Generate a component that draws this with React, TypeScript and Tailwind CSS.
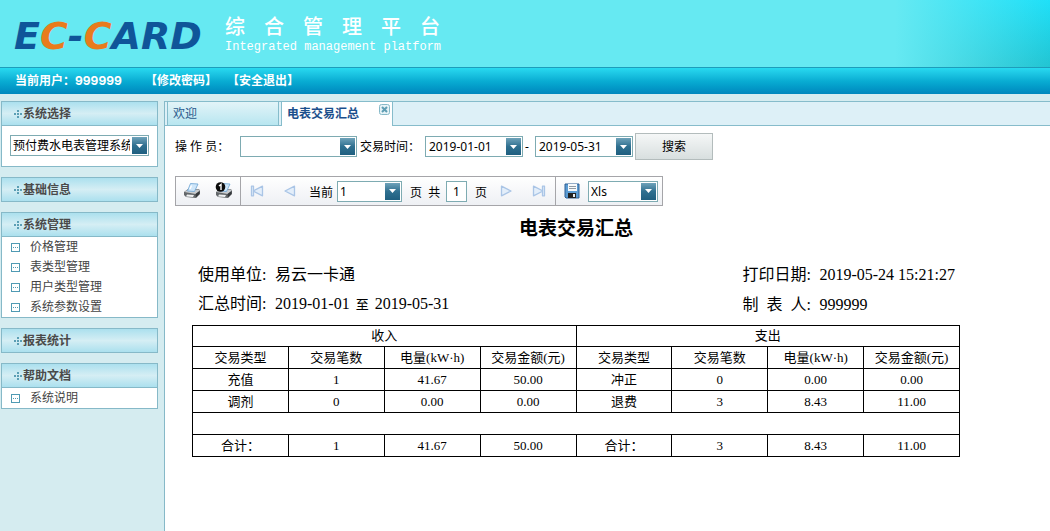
import type { ReactNode } from "react";

const priceLinks = ["价格管理", "表类型管理", "用户类型管理", "系统参数设置"];

const columns = ["交易类型", "交易笔数", "电量(kW·h)", "交易金额(元)"];

const rows = [
  ["充值", "1", "41.67", "50.00", "冲正", "0", "0.00", "0.00"],
  ["调剂", "0", "0.00", "0.00", "退费", "3", "8.43", "11.00"],
];

const totals = ["合计：", "1", "41.67", "50.00", "合计：", "3", "8.43", "11.00"];

function Arrow() {
  return (
    <span className="pointer-events-none absolute top-px right-px flex h-[17px] w-[15px] items-center justify-center bg-linear-to-b from-[#6fa3ba] via-[#2f7090] to-[#1f5f80]">
      <svg width="7" height="4" viewBox="0 0 7 4" fill="#fff">
        <path d="M0 0h7L3.500 4z" />
      </svg>
    </span>
  );
}

function Combo({ label, options, className }: { label: string; options: string[]; className: string }) {
  return (
    <span className={`relative block h-[21px] shrink-0 border border-[#7eabb2] bg-white ${className}`}>
      <select
        aria-label={label}
        className="block h-full w-full appearance-none overflow-hidden bg-transparent pr-[18px] pl-[2px] leading-[19px] whitespace-nowrap text-black outline-none"
      >
        {options.map((o) => (
          <option key={o}>{o}</option>
        ))}
      </select>
      <Arrow />
    </span>
  );
}

function DateBox({ label, value }: { label: string; value: string }) {
  return (
    <span className="relative block h-[21px] w-[98px] shrink-0 border border-[#7eabb2] bg-white">
      <input
        aria-label={label}
        defaultValue={value}
        className="block h-full w-full bg-transparent pr-4 pl-[3px] text-black outline-none"
      />
      <Arrow />
    </span>
  );
}

function Panel({ title, children }: { title: string; children?: ReactNode }) {
  return (
    <section>
      <h2 className="flex h-[25px] items-center border border-[#86b9c8] bg-linear-to-b from-[#abe0ee] via-[#d5eef4] to-[#abe0ee] pl-3 font-bold text-[#4a4a4a]">
        <svg width="9" height="8" viewBox="0 0 9 8" fill="#5b9fb5" shapeRendering="crispEdges">
          <path d="M3 0h2v2H3zM3 3h2v2H3zM3 6h2v2H3zM0 3h2v2H0zM6 3h2v2H6z" />
        </svg>
        {title}
      </h2>
      {children && <div className="border border-t-0 border-[#86b9c8] bg-white">{children}</div>}
    </section>
  );
}

function MenuLink({ text }: { text: string }) {
  return (
    <li>
      <a href="#" className="flex h-5 items-center gap-[10px] pl-[9px] text-[#444]">
        <svg width="9" height="9" viewBox="0 0 9 9" shapeRendering="crispEdges">
          <path d="M0 0h9v9H0z" fill="#4f9ab3" />
          <path d="M1 1h7v7H1z" fill="#fff" />
          <path d="M2 4h1v1H2zM4 4h1v1H4zM6 4h1v1H6z" fill="#4f9ab3" />
        </svg>
        {text}
      </a>
    </li>
  );
}

function PrinterIcon({ page }: { page?: boolean }) {
  return (
    <svg width="18" height="18" viewBox="0 0 18 18">
      <path d="M1 10l4-3h11l1 2v3l-4 4-10-1-2-2z" fill="#63676a" />
      <path d="M1.500 10l3.500-2.500h11l.500 1.500-4 3z" fill="#c9cccf" />
      <path d="M7.500 1.500L15 2l-3.500 7.500-7-.500z" fill="#cfe6f9" stroke="#6ba3d3" strokeWidth=".8" />
      <path d="M8.500 3.500L7 7" stroke="#fff" strokeWidth="1.500" />
      <path d="M12.500 12l4-3v3l-3.500 3.500z" fill="#36393c" />
      <path d="M4 12.500l7 .500-1 2-7-.500z" fill="#f0f2f3" />
      {page && (
        <>
          <circle cx="5.500" cy="5" r="4.800" fill="#0b0b0b" />
          <path d="M4 4l2-1.500V8" fill="none" stroke="#fff" strokeWidth="1.400" />
        </>
      )}
    </svg>
  );
}

function PageIcon({ back, end }: { back?: boolean; end?: boolean }) {
  return (
    <svg className={back ? "rotate-180" : ""} width="14" height="12" viewBox="0 0 14 12" fill="#e3eefa" stroke="#aac5e6" strokeWidth="1.300">
      <path d="M1.500 1.200L11 6l-9.500 4.800z" strokeLinejoin="round" />
      {end && <path d="M10.500 1.200h2v9.600h-2z" strokeLinejoin="round" />}
    </svg>
  );
}

function SaveIcon() {
  return (
    <svg width="16" height="16" viewBox="0 0 16 16">
      <path d="M1 1h14v14H2l-1-1z" fill="#5b9bd2" stroke="#2d5f94" />
      <path d="M4 1h9v7H4z" fill="#f7f9fb" />
      <path d="M5 3.500h7M5 5.500h7" stroke="#909aa4" />
      <path d="M4 10h8v5H4z" fill="#222" />
      <path d="M9 11h2v3H9z" fill="#e8edf2" />
    </svg>
  );
}

function IconButton({ label, children }: { label: string; children: ReactNode }) {
  return (
    <button type="button" aria-label={label} className="flex h-full w-8 shrink-0 items-center justify-center">
      {children}
    </button>
  );
}

export default function App() {
  return (
    <div className="flex min-h-screen flex-col bg-[#d5ecf0] font-['Noto_Sans','Noto_Sans_CJK_SC',sans-serif] text-xs">
      <header>
        <div className="flex h-[68px] items-start border-b border-[#1d9dbb] bg-[#66e9f2]">
          <h1 className="w-[225px] shrink-0 pt-4 pl-[14px] font-['DejaVu_Sans',sans-serif] text-[38px] leading-10 font-bold whitespace-nowrap text-[#0f5599] italic">
            E<span className="text-[#e87b1c]">C</span>-<span className="text-[#e87b1c]">C</span>ARD
          </h1>
          <div className="shrink-0 pt-[14px] text-white">
            <p className="flex font-['Noto_Sans_CJK_SC',sans-serif] gap-[19px] text-xl leading-6 font-medium">
              {"综合管理平台".split("").map((c) => (
                <span key={c}>{c}</span>
              ))}
            </p>
            <p className="mt-[2px] font-['Liberation_Mono',monospace] text-xs leading-[14px]">Integrated management platform</p>
          </div>
          <div className="ml-auto h-full w-[155px] shrink-0 bg-[linear-gradient(to_right,#66e9f2,transparent),linear-gradient(to_bottom,#1fe0f8,#22c4d2)]" />
        </div>
        <nav className="flex h-[26px] items-center bg-linear-to-b from-[#28d9f0] via-[#09add3] to-[#0087bd] pl-[15px] font-bold text-white">
          <span className="w-[130px]">
            当前用户：<span className="font-['Inter',sans-serif]">999999</span>
          </span>
          <a href="#" className="w-[82px]">【修改密码】</a>
          <a href="#">【安全退出】</a>
        </nav>
      </header>

      <div className="flex grow pt-[7px]">
        <aside className="flex w-[164px] shrink-0 flex-col gap-[10px] pr-[6px] pl-px">
          <Panel title="系统选择">
            <div className="px-2 pt-[9px] pb-[10px]">
              <Combo label="系统选择" options={["预付费水电表管理系统"]} className="w-full" />
            </div>
          </Panel>
          <Panel title="基础信息" />
          <Panel title="系统管理">
            <ul>
              {priceLinks.map((t) => (
                <MenuLink key={t} text={t} />
              ))}
            </ul>
          </Panel>
          <Panel title="报表统计" />
          <Panel title="帮助文档">
            <ul>
              <MenuLink text="系统说明" />
            </ul>
          </Panel>
        </aside>

        <main className="min-w-0 grow border-l border-[#86b9c8] bg-white">
          <div className="flex h-[25px] gap-[2px] border-y border-[#86bccb] bg-[#ddf0f7] pl-[2px] text-[#2b5a8c]">
            <button type="button" className="w-[112px] border-x border-[#86bccb] bg-linear-to-b from-[#e2f4f8] to-[#b8e6f0] pl-[5px] text-left">
              欢迎
            </button>
            <div className="-mb-px flex w-[112px] justify-between border-x border-[#86bccb] bg-white pr-[2px] pl-[5px]">
              <button type="button" className="font-bold text-[#1c4f8c]">电表交易汇总</button>
              <button type="button" aria-label="关闭" className="self-start pt-[2px]">
                <svg width="11" height="11" viewBox="0 0 11 11" fill="#e6f3f7" stroke="#86b9c8">
                  <rect x=".5" y=".5" width="10" height="10" rx="2" />
                  <path d="M3 3l5 5M8 3L3 8" stroke="#5f9db3" strokeWidth="2" />
                </svg>
              </button>
            </div>
          </div>

          <form className="flex h-[41px] items-center pl-[10px] text-black">
            <span className="w-[65px] shrink-0">操 作 员：</span>
            <Combo label="操作员" options={[""]} className="w-[117px]" />
            <span className="w-[68px] shrink-0 pl-[3px]">交易时间：</span>
            <DateBox label="开始日期" value="2019-01-01" />
            <span className="w-3 shrink-0 pl-[2px]">-</span>
            <DateBox label="结束日期" value="2019-05-31" />
            <button type="button" className="ml-[2px] h-[27px] w-[78px] shrink-0 border border-[#b3bcbc] bg-linear-to-b from-[#f5f7f7] to-[#d8dfdf]">
              搜索
            </button>
          </form>

          <div className="mt-[9px] ml-[10px] flex h-[30px] w-[488px] items-center border border-[#a5a5a9] bg-linear-to-b from-white to-[#eef0f4] text-black">
            <IconButton label="打印"><PrinterIcon /></IconButton>
            <IconButton label="打印当前页"><PrinterIcon page /></IconButton>
            <span className="h-full w-px bg-[#a5a5a9]" />
            <IconButton label="首页"><PageIcon back end /></IconButton>
            <IconButton label="上一页"><PageIcon back /></IconButton>
            <span className="w-8 shrink-0 pt-1 pl-1">当前</span>
            <Combo label="当前页" options={["1"]} className="w-[65px]" />
            <span className="w-11 shrink-0 pt-1 pl-2 whitespace-pre">页  共</span>
            <input aria-label="总页数" defaultValue="1" className="h-[21px] w-[21px] shrink-0 border border-[#7eabb2] bg-white text-center" />
            <span className="w-6 shrink-0 pt-1 pl-2">页</span>
            <IconButton label="下一页"><PageIcon /></IconButton>
            <IconButton label="末页"><PageIcon end /></IconButton>
            <span className="h-full w-px bg-[#a5a5a9]" />
            <IconButton label="保存"><SaveIcon /></IconButton>
            <Combo label="导出格式" options={["Xls"]} className="w-[70px]" />
          </div>

          <article className="ml-[27px] w-[768px] pt-[10px] text-black">
            <h2 className="text-center text-[19px] leading-6 font-bold">电表交易汇总</h2>
            <div className="flex justify-between pt-5 pr-[5px] pl-[6px] font-['Liberation_Serif','Noto_Sans_CJK_SC',serif] text-base leading-[29px]">
              <dl className="grid grid-cols-[77px_auto]">
                <dt>使用单位:</dt>
                <dd>易云一卡通</dd>
                <dt>汇总时间:</dt>
                <dd>2019-01-01 <span className="mx-[2px] text-[13px]">至</span> 2019-05-31</dd>
              </dl>
              <dl className="grid grid-cols-[77px_auto]">
                <dt>打印日期:</dt>
                <dd>2019-05-24 15:21:27</dd>
                <dt className="whitespace-pre">制  表  人:</dt>
                <dd>999999</dd>
              </dl>
            </div>
            <table className="mt-[6px] w-full table-fixed border-collapse text-center font-['Liberation_Serif','Noto_Sans_CJK_SC',serif] text-[13px] leading-5 [&_td]:border [&_td]:border-black [&_td]:p-0 [&_th]:border [&_th]:border-black [&_th]:p-0 [&_th]:font-normal">
              <thead>
                <tr className="h-[21px]">
                  <th colSpan={4}>收入</th>
                  <th colSpan={4}>支出</th>
                </tr>
                <tr className="h-[22px]">
                  {[...columns, ...columns].map((c, i) => (
                    <th key={i}>{c}</th>
                  ))}
                </tr>
              </thead>
              <tbody>
                {rows.map((row) => (
                  <tr key={row[0]} className="h-[22px]">
                    {row.map((cell, i) => (
                      <td key={i}>{cell}</td>
                    ))}
                  </tr>
                ))}
                <tr className="h-[22px]">
                  <td colSpan={8}></td>
                </tr>
                <tr className="h-[22px]">
                  {totals.map((cell, i) => (
                    <td key={i}>{cell}</td>
                  ))}
                </tr>
              </tbody>
            </table>
          </article>
        </main>
      </div>
    </div>
  );
}
